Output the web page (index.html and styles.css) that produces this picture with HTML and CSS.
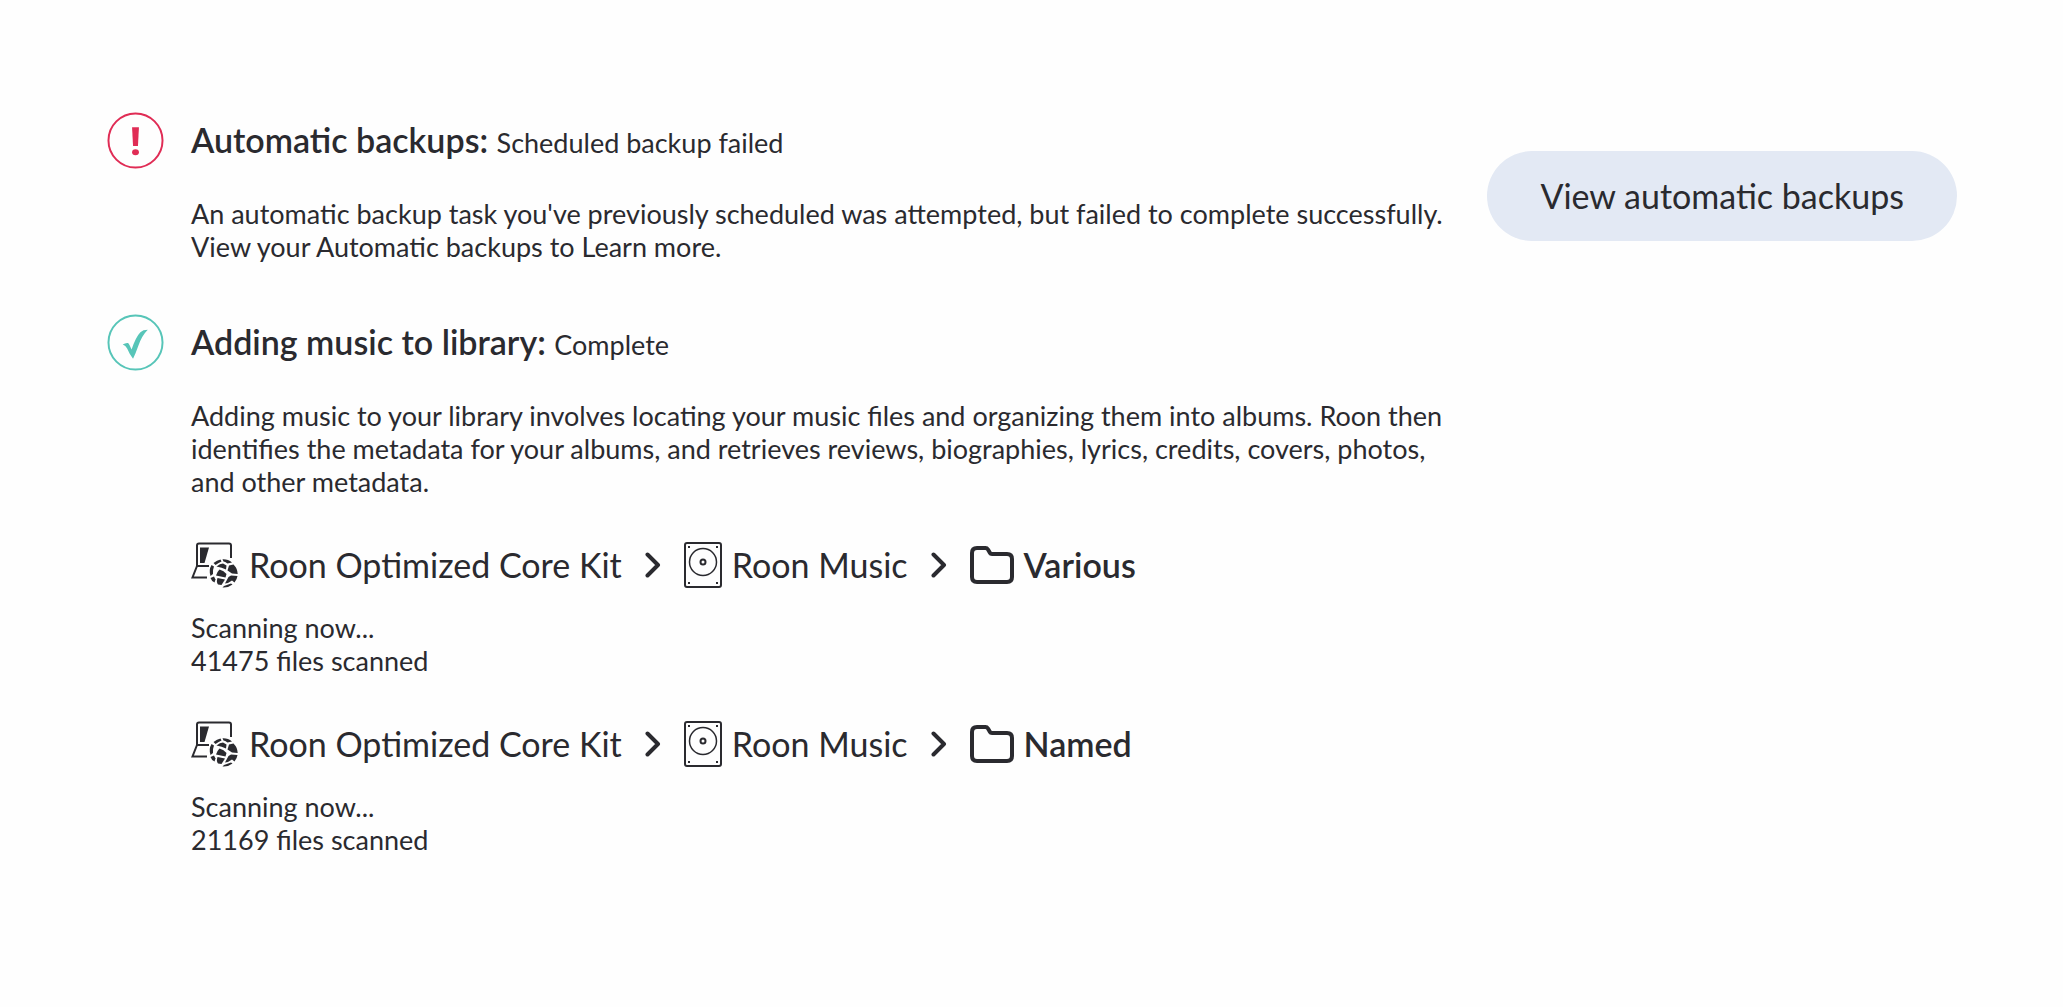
FILE: index.html
```html
<!DOCTYPE html>
<html lang="en">
<head>
    <meta charset="UTF-8">
    <meta name="viewport" content="width=device-width, initial-scale=1.0">
    <title>Activity</title>
    <link rel="stylesheet" href="styles.css">
</head>
<body>
    <!-- Shared icons -->
    <svg class="sprite" aria-hidden="true">
        <symbol id="icon-core" viewBox="0 0 48 48">
            <path d="M6 25V4.500q0-2 2-2h30q2 0 2 2V17M6 25 1.500 36.500H16M6 25H18" fill="none" stroke="currentColor" stroke-width="2"/>
            <path d="M9 6.500H18L13.500 22H9z" fill="currentColor"/>
            <g fill="currentColor">
                <path d="M22.500 22Q26 19 29.500 18.500L30.500 20.500Q27 22 24.500 24z"/>
                <path d="M31.500 18.300Q37 18 41 21.500L36.500 22.500Q34 20.500 32.500 20.500z"/>
                <path d="M20.500 24 23 25.500Q21.500 29 22 33L19.500 35Q17.500 29 20.500 24z"/>
                <path d="M25.500 25.500Q29 22.500 32 22.500L35.500 24.500 35 28.500Q31 26.500 25.500 25.500z"/>
                <path d="M38 24.500 42.500 23.500Q46.500 27.500 46.700 33L41 32.500 36.500 29.500z"/>
                <path d="M28.500 28.500Q33 29.500 35.500 33L34.500 36.500 25 34.500Q26 31 28.500 28.500z"/>
                <path d="M19.500 37 23 35.500 24.500 38.500 23.500 41.500Q20.500 40 19.500 37z"/>
                <path d="M26.500 37 34 38.500 30.500 44 27 43.500Q25 41 26.500 37z"/>
                <path d="M37.500 36 40 34.500 46.500 35Q46 38.500 43.500 41.500L41 39.500Q38 42 34 42.500z"/>
                <path d="M33 45 40 42.500 41.500 43.500Q37 47 31.500 46.500z"/>
            </g>
        </symbol>
        <symbol id="icon-disk" viewBox="0 0 38 46">
            <rect x="1" y="1" width="36" height="44" rx="2" fill="none" stroke="currentColor" stroke-width="2"/>
            <circle cx="19" cy="20" r="13.500" fill="none" stroke="currentColor" stroke-width="1.500"/>
            <circle cx="19" cy="20" r="2.500" fill="none" stroke="currentColor" stroke-width="2"/>
            <path d="M4 4h2v2H4zM32 4h2v2h-2zM4 40h2v2H4zM32 40h2v2h-2z" fill="currentColor"/>
        </symbol>
        <symbol id="icon-folder" viewBox="0 0 44 38">
            <path d="M7 2H15.500Q17 2 18 3.500L20 7Q20.500 8 22 8H37Q42 8 42 13V31Q42 36 37 36H7Q2 36 2 31V7Q2 2 7 2z" fill="none" stroke="currentColor" stroke-width="4"/>
        </symbol>
        <symbol id="icon-chevron" viewBox="0 0 16 26">
            <path d="M2.500 2.500 13 13 2.500 23.500" fill="none" stroke="currentColor" stroke-width="4" stroke-linecap="round" stroke-linejoin="round"/>
        </symbol>
    </svg>

    <main class="activity">
        <section class="task">
            <svg class="status status-failed" viewBox="0 0 58 58" aria-hidden="true">
                <circle cx="29" cy="29" r="27.500" fill="none" stroke="currentColor" stroke-width="2"/>
                <path d="M25.500 15.500H32.500L31.500 34.500H26.500z" fill="currentColor"/>
                <ellipse cx="29" cy="41" rx="3.500" ry="3" fill="currentColor"/>
            </svg>
            <div class="task-body">
                <h2 class="task-title">Automatic backups: <span class="task-state">Scheduled backup failed</span></h2>
                <p class="text">An automatic backup task you've previously scheduled was attempted, but failed to complete successfully. View your Automatic backups to Learn more.</p>
            </div>
            <button class="action" type="button">View automatic backups</button>
        </section>

        <section class="task">
            <svg class="status status-complete" viewBox="0 0 58 58" aria-hidden="true">
                <circle cx="29" cy="29" r="27.500" fill="none" stroke="currentColor" stroke-width="2"/>
                <path d="M16 31Q19 29 21.500 29.500Q23 31 25 36Q29.500 23 34 18.500Q36.500 16 41.500 16Q35.500 22 32 32Q29 40.500 26.500 45.500Q22.500 40 20.500 35Q19 32 16 31z" fill="currentColor"/>
            </svg>
            <div class="task-body">
                <h2 class="task-title">Adding music to library: <span class="task-state">Complete</span></h2>
                <p class="text">Adding music to your library involves locating your music files and organizing them into albums. Roon then identifies the metadata for your albums, and retrieves reviews, biographies, lyrics, credits, covers, photos, and other metadata.</p>

                <div class="path">
                    <svg class="icon-core" aria-hidden="true"><use href="#icon-core"/></svg>
                    <span>Roon Optimized Core Kit</span>
                    <svg class="icon-chevron" aria-hidden="true"><use href="#icon-chevron"/></svg>
                    <svg class="icon-disk" aria-hidden="true"><use href="#icon-disk"/></svg>
                    <span>Roon Music</span>
                    <svg class="icon-chevron" aria-hidden="true"><use href="#icon-chevron"/></svg>
                    <svg class="icon-folder" aria-hidden="true"><use href="#icon-folder"/></svg>
                    <strong>Various</strong>
                </div>
                <p class="text">Scanning now...<br>41475 files scanned</p>

                <div class="path">
                    <svg class="icon-core" aria-hidden="true"><use href="#icon-core"/></svg>
                    <span>Roon Optimized Core Kit</span>
                    <svg class="icon-chevron" aria-hidden="true"><use href="#icon-chevron"/></svg>
                    <svg class="icon-disk" aria-hidden="true"><use href="#icon-disk"/></svg>
                    <span>Roon Music</span>
                    <svg class="icon-chevron" aria-hidden="true"><use href="#icon-chevron"/></svg>
                    <svg class="icon-folder" aria-hidden="true"><use href="#icon-folder"/></svg>
                    <strong>Named</strong>
                </div>
                <p class="text">Scanning now...<br>21169 files scanned</p>
            </div>
        </section>
    </main>
</body>
</html>
```
FILE: styles.css
```css
* {
    margin: 0;
    padding: 0;
    box-sizing: border-box;
}

:root {
    --text: #2a2a2f;
    --failed: #e02c55;
    --complete: #57c5b8;
    --action: #e3e9f4;
}

body {
    background: #fefefe;
    color: var(--text);
    font-family: Lato, sans-serif;
    font-size: 27px;
    line-height: 33px;
}

.sprite {
    display: none;
}

.activity {
    display: flex;
    flex-direction: column;
    gap: 51px;
    padding: 112px 106px 112px 107px;
}

.task {
    display: grid;
    grid-template-columns: 57px minmax(0, 1260px) auto;
    column-gap: 27px;
    align-items: start;
}

.status {
    width: 57px;
    height: 57px;
}

.status-failed {
    color: var(--failed);
}

.status-complete {
    color: var(--complete);
}

.task-title {
    margin-bottom: 29px;
    font-size: 34px;
    font-weight: 600;
    line-height: 56px;
}

.task-state {
    font-size: 27px;
    font-weight: 400;
    line-height: 33px;
}

.action {
    justify-self: end;
    margin: 39px 0 0 9px;
    padding: 0 53px;
    border: none;
    border-radius: 45px;
    background: var(--action);
    color: inherit;
    font-family: inherit;
    font-size: 34px;
    line-height: 90px;
    white-space: nowrap;
    cursor: pointer;
}

.path {
    display: flex;
    align-items: center;
    gap: 10px;
    margin: 43px 0 22px;
    font-size: 34px;
    line-height: 48px;
}

.path strong {
    font-weight: 600;
}

.icon-core {
    width: 48px;
    height: 48px;
}

.icon-disk {
    width: 38px;
    height: 46px;
}

.icon-folder {
    width: 44px;
    height: 38px;
}

.icon-chevron {
    width: 16px;
    height: 26px;
    margin: 0 13px;
}

@media (max-width: 1100px) {
    .activity {
        padding: 40px 24px;
    }

    .action {
        grid-column: 2;
        justify-self: start;
        margin: 24px 0 0;
    }

    .path {
        flex-wrap: wrap;
    }
}
```
